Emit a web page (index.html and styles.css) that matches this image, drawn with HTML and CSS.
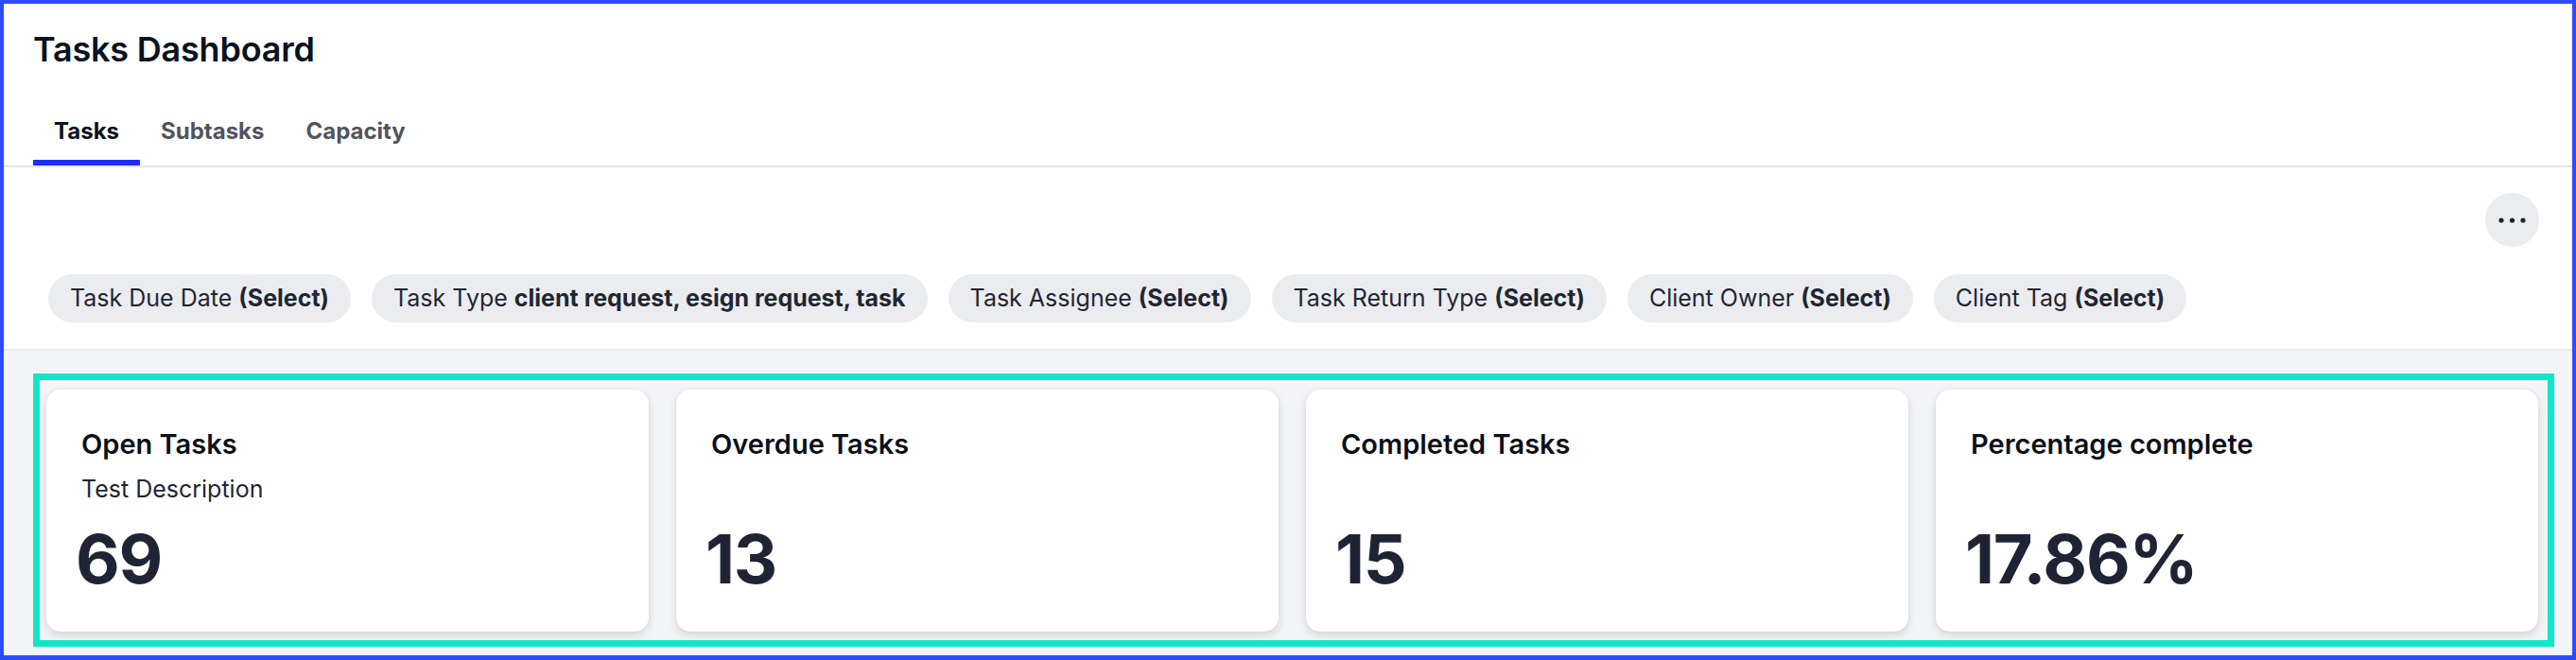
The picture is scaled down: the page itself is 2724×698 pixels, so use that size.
FILE: index.html
```html
<!DOCTYPE html>
<html lang="en">
<head>
<meta charset="utf-8">
<title>Tasks Dashboard</title>
<link rel="stylesheet" href="styles.css">
</head>
<body>
<div class="frame">
  <header class="header">
    <h1 class="title">Tasks Dashboard</h1>
    <nav class="tabs">
      <a class="tab active">Tasks</a>
      <a class="tab">Subtasks</a>
      <a class="tab">Capacity</a>
    </nav>
    <div class="toolbar">
      <div class="toolbar-top">
        <button class="more" aria-label="More options">
          <svg width="34" height="8" viewBox="0 0 34 8"><circle cx="5" cy="4" r="2.6"/><circle cx="16.5" cy="4" r="2.6"/><circle cx="28" cy="4" r="2.6"/></svg>
        </button>
      </div>
      <div class="chips">
        <span class="chip">Task Due Date <b>(Select)</b></span>
        <span class="chip">Task Type <b>client request, esign request, task</b></span>
        <span class="chip">Task Assignee <b>(Select)</b></span>
        <span class="chip">Task Return Type <b>(Select)</b></span>
        <span class="chip">Client Owner <b>(Select)</b></span>
        <span class="chip">Client Tag <b>(Select)</b></span>
      </div>
    </div>
  </header>
  <main class="content">
    <section class="cards">
      <div class="card">
        <div class="card-title">Open Tasks</div>
        <div class="card-desc">Test Description</div>
        <div class="card-value">69</div>
      </div>
      <div class="card">
        <div class="card-title">Overdue Tasks</div>
        <div class="card-desc"></div>
        <div class="card-value">13</div>
      </div>
      <div class="card">
        <div class="card-title">Completed Tasks</div>
        <div class="card-desc"></div>
        <div class="card-value">15</div>
      </div>
      <div class="card">
        <div class="card-title">Percentage complete</div>
        <div class="card-desc"></div>
        <div class="card-value">17.86%</div>
      </div>
    </section>
  </main>
</div>
</body>
</html>
```

FILE: styles.css
```css
* { box-sizing: border-box; }
html, body { margin: 0; padding: 0; }
body {
  font-family: Inter, "Noto Sans", "Liberation Sans", sans-serif;
  color: #111827;
  background: #ffffff;
}
.frame {
  width: 2724px;
  height: 698px;
  border: 4px solid #2e4cff;
  border-bottom-width: 5px;
  display: flex;
  flex-direction: column;
  overflow: hidden;
}
.header {
  background: #ffffff;
  position: relative;
  z-index: 1;
  box-shadow: 0 1px 4px rgba(16, 24, 40, 0.08);
}
.title {
  margin: 0;
  padding: 21px 31px 0;
  font-size: 36px;
  line-height: 54px;
  font-weight: 600;
  color: #0b1220;
  letter-spacing: -0.2px;
}
.tabs {
  display: flex;
  margin-top: 30px;
  padding: 0 31px;
  border-bottom: 2px solid #e3e4e8;
}
.tab {
  display: block;
  padding: 13px 22px 13px;
  font-size: 24px;
  line-height: 34px;
  font-weight: 700;
  color: #50545f;
  border-bottom: 6px solid transparent;
}
.tab.active {
  color: #0b1220;
  border-bottom-color: #1f2eff;
}
.toolbar {
  padding: 27px 35px 28px 47px;
}
.toolbar-top {
  display: flex;
  justify-content: flex-end;
}
.more {
  width: 57px;
  height: 57px;
  border: none;
  border-radius: 50%;
  background: #ebecf0;
  display: flex;
  align-items: center;
  justify-content: center;
  padding: 0;
}
.more svg { fill: #1f2430; display: block; }
.chips {
  display: flex;
  gap: 22px;
  margin-top: 29px;
}
.chip {
  background: #ebecf0;
  border-radius: 26px;
  padding: 9px 23px;
  font-size: 25px;
  line-height: 33px;
  color: #1f2633;
  white-space: nowrap;
}
.chip b { font-weight: 700; }
.content {
  flex: 1;
  background: #f3f4f7;
  padding: 26px 19px 8px 31px;
}
.cards {
  border: 7px solid #10e6c8;
  padding: 10px 10px 9px 7px;
  display: grid;
  grid-template-columns: repeat(4, 1fr);
  gap: 29px;
}
.card {
  background: #ffffff;
  border-radius: 15px;
  box-shadow: 0 4px 10px rgba(16, 24, 40, 0.13), 0 0 3px rgba(16, 24, 40, 0.06);
  padding: 40px 37px 41px;
  height: 256px;
  display: flex;
  flex-direction: column;
}
.card-title {
  font-size: 29px;
  line-height: 36px;
  font-weight: 600;
  color: #0a0f1a;
}
.card-desc {
  margin-top: 14px;
  font-size: 25px;
  line-height: 31px;
  color: #1f2633;
  min-height: 31px;
}
.card-value {
  margin-top: auto;
  margin-left: -6px;
  font-size: 72px;
  line-height: 72px;
  font-weight: 700;
  color: #1e2433;
  letter-spacing: -1.2px;
}
```
